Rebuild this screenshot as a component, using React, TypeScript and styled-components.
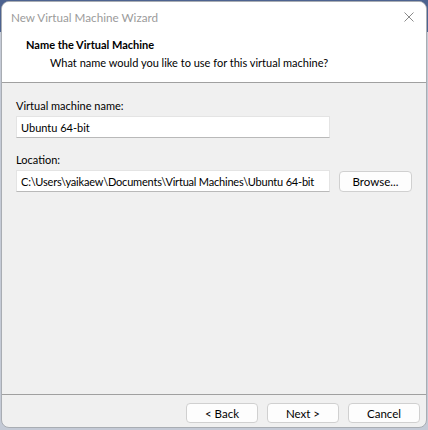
import React from "react";
import styled, { createGlobalStyle } from "styled-components";

const Global = createGlobalStyle`
  html, body { margin: 0; padding: 0; }
  body {
    width: 428px;
    height: 430px;
    overflow: hidden;
    background: linear-gradient(180deg, #4d6390 0px, #4d6390 32px, #c4cad6 32px, #c4cad6 100%);
    font-family: Lato, "Segoe UI", sans-serif;
    font-size: 11px;
    color: #000;
  }
  #root { padding: 1px 0 0 1px; }
`;

const Window = styled.div`
  width: 426px;
  height: 427px;
  box-sizing: border-box;
  border: 1px solid #a9adb3;
  border-radius: 8px;
  overflow: hidden;
  background: #f0f0f0;
  display: flex;
  flex-direction: column;
`;

const TitleBar = styled.div`
  height: 30px;
  flex: none;
  background: #ffffff;
  display: flex;
  align-items: center;
  justify-content: space-between;
  padding: 0 8px 0 9px;
`;

const Title = styled.span`
  color: #9b9b9b;
  font-size: 11.7px;
  line-height: 16px;
`;

const CloseIcon = styled.svg`
  width: 10px;
  height: 10px;
  margin-right: 4px;
`;

const Header = styled.div`
  height: 51px;
  flex: none;
  box-sizing: border-box;
  background: #ffffff;
  border-bottom: 1px solid #a0a0a0;
  padding: 5px 0 0 24px;
  display: flex;
  flex-direction: column;
  gap: 2px;
`;

const HeaderTitle = styled.div`
  font-weight: 700;
  line-height: 16px;
`;

const HeaderSub = styled.div`
  padding-left: 24px;
  line-height: 16px;
`;

const Body = styled.div`
  flex: 1;
  padding: 15px 15px 0 14px;
  display: flex;
  flex-direction: column;
`;

const Label = styled.div<{ $top?: number }>`
  line-height: 16px;
  margin-top: ${(p) => p.$top ?? 0}px;
  margin-bottom: 2px;
`;

const Row = styled.div`
  display: flex;
  align-items: center;
  gap: 9px;
`;

const TextBox = styled.div<{ $tight?: boolean }>`
  width: 314px;
  height: 22px;
  flex: none;
  box-sizing: border-box;
  background: #ffffff;
  border: 1px solid #e4e4e4;
  border-bottom-color: #b9b9b9;
  padding: 0 4px;
  display: flex;
  align-items: center;
  white-space: nowrap;
  overflow: hidden;
  letter-spacing: ${(p) => (p.$tight ? "-0.2px" : "0")};
`;

const Button = styled.button<{ $w?: number; $h?: number }>`
  width: ${(p) => p.$w ?? 72}px;
  height: ${(p) => p.$h ?? 20}px;
  flex: none;
  box-sizing: border-box;
  background: #fdfdfd;
  border: 1px solid #d0d0d0;
  border-radius: 4px;
  font-family: inherit;
  font-size: 11.5px;
  color: #000;
  padding: 0;
  display: flex;
  align-items: center;
  justify-content: center;
`;

const Footer = styled.div`
  flex: none;
  height: 33px;
  box-sizing: border-box;
  border-top: 1px solid #a0a0a0;
  display: flex;
  justify-content: flex-end;
  align-items: flex-start;
  gap: 9px;
  padding: 8px 6px 0 0;
`;

export default function App() {
  return (
    <>
      <Global />
      <Window>
        <TitleBar>
          <Title>New Virtual Machine Wizard</Title>
          <CloseIcon viewBox="0 0 10 10">
            <path d="M0.5 0.5 L9.5 9.5 M9.5 0.5 L0.5 9.5" stroke="#8a8a8a" strokeWidth="1" fill="none" />
          </CloseIcon>
        </TitleBar>
        <Header>
          <HeaderTitle>Name the Virtual Machine</HeaderTitle>
          <HeaderSub>What name would you like to use for this virtual machine?</HeaderSub>
        </Header>
        <Body>
          <Label>Virtual machine name:</Label>
          <TextBox>Ubuntu 64-bit</TextBox>
          <Label $top={14}>Location:</Label>
          <Row>
            <TextBox $tight>C:\Users\yaikaew\Documents\Virtual Machines\Ubuntu 64-bit</TextBox>
            <Button $w={73} $h={21}>Browse...</Button>
          </Row>
        </Body>
        <Footer>
          <Button>&lt; Back</Button>
          <Button>Next &gt;</Button>
          <Button>Cancel</Button>
        </Footer>
      </Window>
    </>
  );
}
